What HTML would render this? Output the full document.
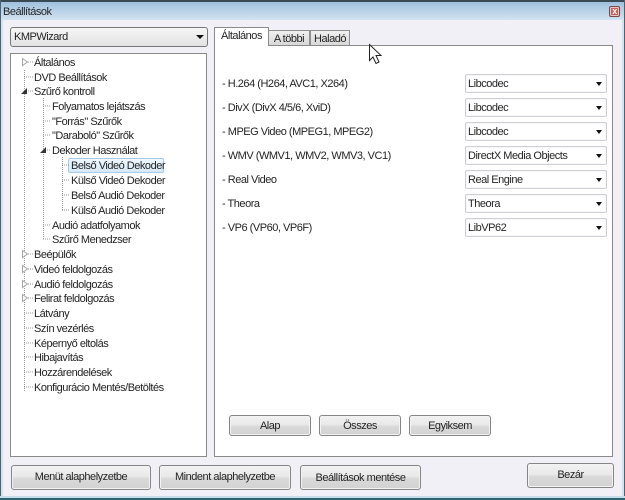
<!DOCTYPE html>
<html><head><meta charset="utf-8"><style>
html,body{margin:0;padding:0}
body{width:625px;height:500px;overflow:hidden;position:relative;background:#f1f0f7;font:11px "Liberation Sans",sans-serif;letter-spacing:-.48px;color:#242424}
div{position:absolute;box-sizing:border-box;white-space:nowrap}
.t{line-height:14px;height:14px;margin-top:1px}
.btn{border:1px solid #858585;border-radius:3px;background:linear-gradient(#f2f2f2 0,#e9e9e9 45%,#d9d9d9 55%,#d2d2d2 100%);text-align:center;box-shadow:inset 0 0 0 1px #f3f3f3}
.sel{left:465px;width:142px;height:19px;background:#fff;border:1px solid #cfcfd4;border-radius:2px;padding-left:2px;line-height:18px;box-shadow:inset 0 0 0 1px #f6f6f8}
.sel:after{content:"";position:absolute;right:4px;top:7px;border-left:3.500px solid transparent;border-right:3.500px solid transparent;border-top:4px solid #111}
.tab{background:linear-gradient(#f0f0f0,#d8d8d8);border:1px solid #8f8f8f;border-bottom:none;top:30px;height:15px;text-align:center;line-height:16px}
</style></head><body>
<div style="left:0;top:0;width:625px;height:20px;background:linear-gradient(#9fc1de,#d3e3f0);border-top:2px solid #3a4a52"></div>
<div style="left:0;top:19px;width:3px;height:478px;background:#d3e3f0"></div>
<div style="left:622px;top:19px;width:3px;height:478px;background:#d3e3f0"></div>
<div style="left:0;top:0;width:1px;height:500px;background:#4d6470"></div>
<div style="left:624px;top:0;width:1px;height:500px;background:#4d6470"></div>
<div style="left:0;top:496px;width:625px;height:4px;background:#c8dcea;border-bottom:2px solid #2f6373"></div>
<div class="t" style="left:3px;top:4px">Beállítások</div>
<div style="left:609px;top:6px;width:11px;height:11px;background:#c8645a;border:1px solid #7a4a48;border-radius:2px;color:#fff;font:bold 9px/9px 'Liberation Sans',sans-serif;text-align:center;box-shadow:inset 0 0 0 1px #e6c8c4">x</div>

<div style="left:10px;top:27px;width:198px;height:20px;background:linear-gradient(#f6f6f6,#e2e2e2);border:1px solid #777;border-radius:3px;padding-left:3px;line-height:19px">KMPWizard</div>
<div style="left:196px;top:35px;border-left:4px solid transparent;border-right:4px solid transparent;border-top:4px solid #111"></div>

<div style="left:10px;top:53px;width:197px;height:404px;background:#fff;border:1px solid #8a8a8a"></div>
<div style="left:68px;top:158px;width:96px;height:15px;background:linear-gradient(#f0f7fd,#d6e9f8);border:1px solid #a5cbe6;border-radius:2px"></div>

<svg style="position:absolute;left:0;top:0" width="625" height="500">
<g stroke="#999" stroke-width="1" stroke-dasharray="1 1" fill="none" shape-rendering="crispEdges">
<path d="M24.500 70V392M24 77H33M24 254H33M24 269H33M24 284H33M24 298H33M24 313H33M24 328H33M24 343H33M24 357H33M24 372H33M24 387H33M24 62H33M24 91H33"/>
<path d="M43.500 98V240M43 106H51M43 121H51M43 135H51M43 150H51M43 225H51M43 239H51"/>
<path d="M62.500 157V210M62 165H69M62 180H69M62 195H69M62 210H69"/>
</g>
<g fill="#fff" stroke="#a6a6a6"><path d="M22.500 58.500L27.500 62L22.500 65.500ZM22.500 250.500L27.500 254L22.500 257.500ZM22.500 265.500L27.500 269L22.500 272.500ZM22.500 280.500L27.500 284L22.500 287.500ZM22.500 294.500L27.500 298L22.500 301.500Z"/></g>
<g fill="#333"><path d="M27 88V94H21ZM46 147V153H40Z"/></g>
</svg>

<div class="t" style="left:34px;top:55px">Általános</div>
<div class="t" style="left:34px;top:70px">DVD Beállítások</div>
<div class="t" style="left:34px;top:84px">Szűrő kontroll</div>
<div class="t" style="left:52px;top:99px">Folyamatos lejátszás</div>
<div class="t" style="left:52px;top:114px">"Forrás" Szűrők</div>
<div class="t" style="left:52px;top:128px">"Daraboló" Szűrők</div>
<div class="t" style="left:52px;top:143px">Dekoder Használat</div>
<div class="t" style="left:71px;top:158px">Belső Videó Dekoder</div>
<div class="t" style="left:71px;top:173px">Külső Videó Dekoder</div>
<div class="t" style="left:71px;top:188px">Belső Audió Dekoder</div>
<div class="t" style="left:71px;top:203px">Külső Audió Dekoder</div>
<div class="t" style="left:52px;top:218px">Audió adatfolyamok</div>
<div class="t" style="left:52px;top:232px">Szűrő Menedzser</div>
<div class="t" style="left:34px;top:247px">Beépülők</div>
<div class="t" style="left:34px;top:262px">Videó feldolgozás</div>
<div class="t" style="left:34px;top:277px">Audió feldolgozás</div>
<div class="t" style="left:34px;top:291px">Felirat feldolgozás</div>
<div class="t" style="left:34px;top:306px">Látvány</div>
<div class="t" style="left:34px;top:321px">Szín vezérlés</div>
<div class="t" style="left:34px;top:336px">Képernyő eltolás</div>
<div class="t" style="left:34px;top:350px">Hibajavítás</div>
<div class="t" style="left:34px;top:365px">Hozzárendelések</div>
<div class="t" style="left:34px;top:380px">Konfigurácio Mentés/Betöltés</div>

<div style="left:214px;top:45px;width:399px;height:412px;background:#fff;border:1px solid #8a8a8a"></div>
<div class="tab" style="left:268px;width:42px;">A többi</div>
<div class="tab" style="left:310px;width:40px;">Haladó</div>
<div style="left:214px;top:27px;width:55px;height:19px;background:#fff;border:1px solid #8a8a8a;border-bottom:none;text-align:center;line-height:17px">Általános</div>

<div class="t" style="left:222px;top:76px">- H.264 (H264, AVC1, X264)</div>
<div class="t" style="left:222px;top:100px">- DivX (DivX 4/5/6, XviD)</div>
<div class="t" style="left:222px;top:124px">- MPEG Video (MPEG1, MPEG2)</div>
<div class="t" style="left:222px;top:148px">- WMV (WMV1, WMV2, WMV3, VC1)</div>
<div class="t" style="left:222px;top:172px">- Real Video</div>
<div class="t" style="left:222px;top:196px">- Theora</div>
<div class="t" style="left:222px;top:220px">- VP6 (VP60, VP6F)</div>

<div class="sel" style="top:74px">Libcodec</div>
<div class="sel" style="top:98px">Libcodec</div>
<div class="sel" style="top:122px">Libcodec</div>
<div class="sel" style="top:146px">DirectX Media Objects</div>
<div class="sel" style="top:170px">Real Engine</div>
<div class="sel" style="top:194px">Theora</div>
<div class="sel" style="top:218px">LibVP62</div>

<div class="btn" style="left:229px;top:415px;width:82px;height:21px;line-height:20px">Alap</div>
<div class="btn" style="left:319px;top:415px;width:82px;height:21px;line-height:20px">Összes</div>
<div class="btn" style="left:409px;top:415px;width:82px;height:21px;line-height:20px">Egyiksem</div>

<div class="btn" style="left:11px;top:465px;width:140px;height:25px;line-height:23px">Menüt alaphelyzetbe</div>
<div class="btn" style="left:159px;top:465px;width:132px;height:25px;line-height:23px">Mindent alaphelyzetbe</div>
<div class="btn" style="left:300px;top:465px;width:121px;height:25px;line-height:24px">Beállítások mentése</div>
<div class="btn" style="left:527px;top:463px;width:87px;height:25px;line-height:23px">Bezár</div>

<svg style="position:absolute;left:366px;top:42px" width="18" height="24"><path d="M3.500 2.500V18.500L7 15L10 21.500L13 20L10 13.500H15Z" fill="#fff" stroke="#222" stroke-width="1"/></svg>
</body></html>
